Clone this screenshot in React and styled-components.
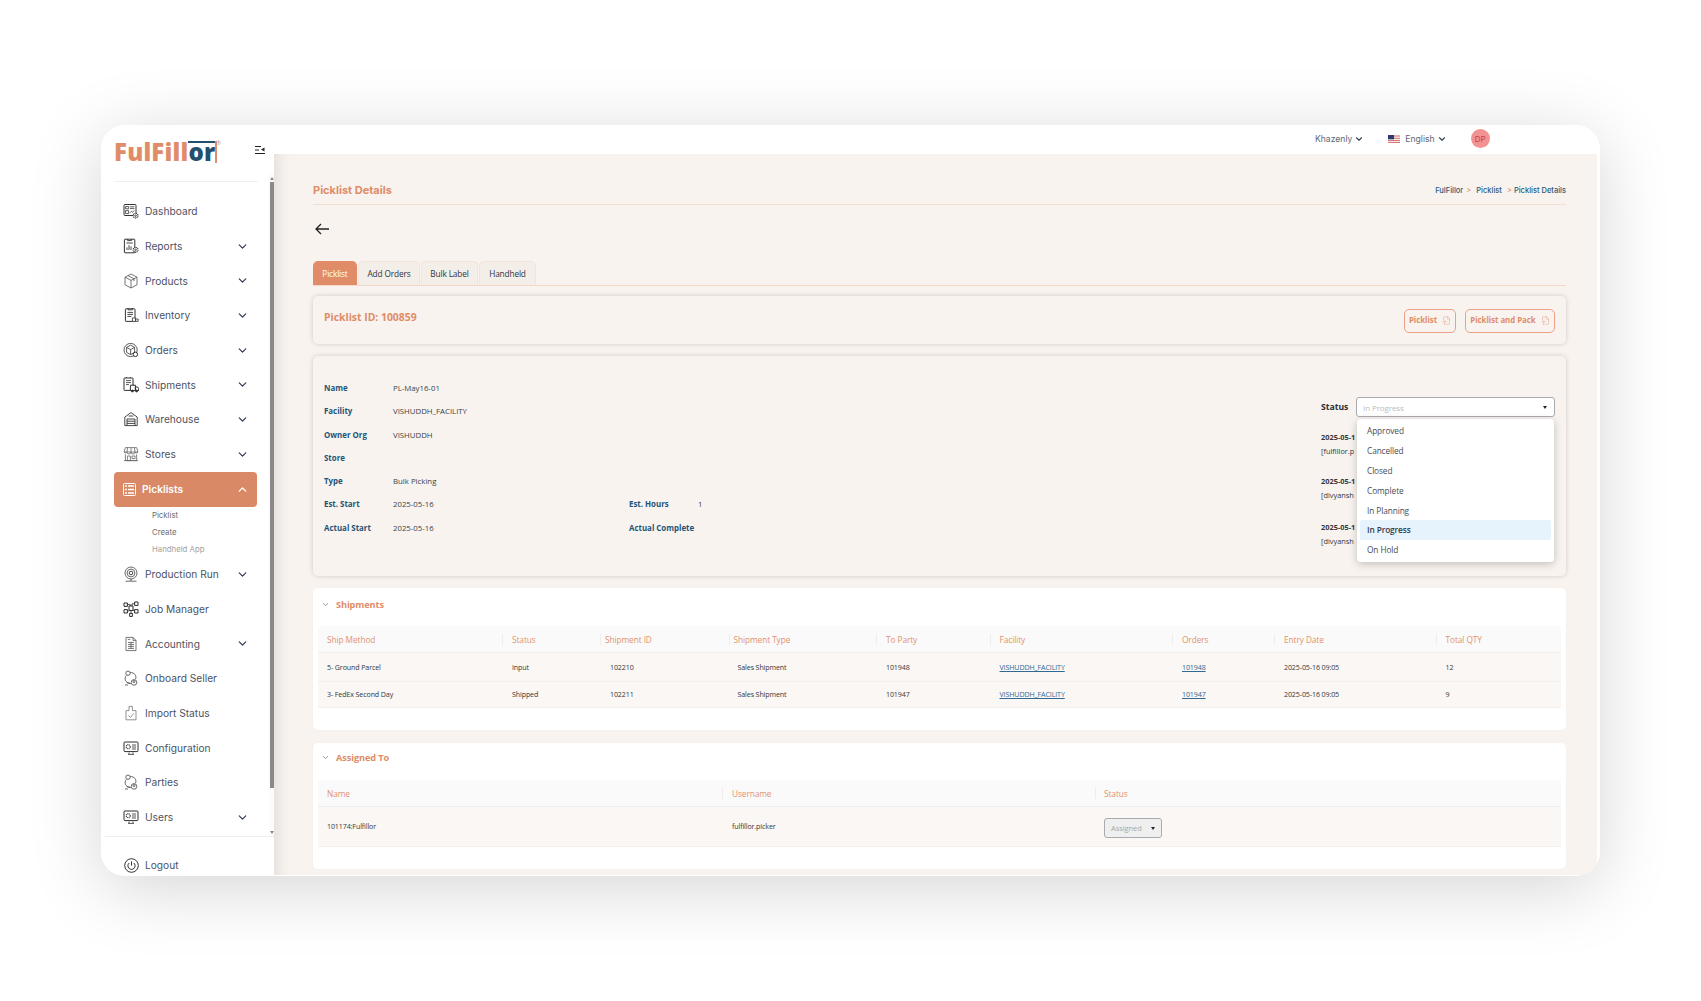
import React from "react";
import styled, { createGlobalStyle } from "styled-components";
import { ChevronDown, ChevronUp, FileType2 } from "lucide-react";

const ORANGE = "#e08c68";
const NAVY = "#1f5577";
const UI = `"Open Sans", "Noto Sans", sans-serif`;
const HEAD = `Inter, "Liberation Sans", sans-serif`;

const Global = createGlobalStyle`
  html, body { margin: 0; padding: 0; background: #fff; overflow: hidden; height: 100%; }
  * { box-sizing: border-box; }
  #root { font-family: ${UI}; }
`;

const Stage = styled.div`
  padding: 125px 0 0 101px;
`;
const Win = styled.div`
  width: 1499px;
  height: 751px;
  display: flex;
  background: #fff;
  border-radius: 24px;
  overflow: hidden;
  padding: 0 3px 1px 0;
  box-shadow: 0 12px 70px rgba(0, 0, 0, 0.17);
`;

/* ---------- sidebar ---------- */
const Side = styled.aside`
  width: 173px;
  flex: none;
  display: flex;
  flex-direction: column;
  background: #fff;
`;
const SideBody = styled.div`
  flex: 1;
  min-height: 0;
  display: flex;
`;
const SideCol = styled.div`
  width: 168px;
  flex: none;
  padding-left: 13px;
`;
const Brand = styled.div`
  height: 57px;
  margin-right: 11px;
  border-bottom: 1px solid #efefef;
  display: flex;
  align-items: flex-start;
  justify-content: space-between;
  padding-top: 13px;
`;
const Logo = styled.div`
  position: relative;
  font-family: "Open Sans", sans-serif;
  font-weight: 800;
  font-size: 24px;
  line-height: 28px;
  letter-spacing: 0.2px;
  color: ${ORANGE};
`;
const LogoDark = styled.span`
  position: relative;
  color: #24506f;
  font-weight: 800;
  &::before {
    content: "";
    position: absolute;
    left: 0;
    right: 0;
    top: 6px;
    height: 2px;
    background: #24506f;
  }
  &::after {
    content: "";
    position: absolute;
    right: -1.5px;
    top: 6px;
    bottom: 5px;
    width: 1.5px;
    background: ${ORANGE};
  }
`;
const LogoMark = styled.span`
  position: absolute;
  top: 1px;
  left: 102px;
  font-size: 6px;
  line-height: 8px;
  font-weight: 400;
  letter-spacing: 0;
  color: #999;
`;
const Collapse = styled.svg`
  width: 10px;
  height: 10px;
  margin: 7px -7px 0 0;
  flex: none;
`;
const Menu = styled.nav`
  padding: 12px 0 0 0;
  margin-right: 12px;
`;
const Row = styled.div`
  height: ${(p) => (p.$active ? "35.5px" : "34.7px")};
  display: flex;
  align-items: center;
  padding-left: 9px;
  padding-right: 8px;
  border-radius: 4px;
  background: ${(p) => (p.$active ? "#d98965" : "transparent")};
  color: ${(p) => (p.$active ? "#fff" : "#4d5262")};
  font-family: ${HEAD};
  font-size: 10.2px;
  font-weight: ${(p) => (p.$active ? 600 : 400)};
`;
const IconBox = styled.span`
  width: ${(p) => (p.$active ? "13px" : "16px")};
  height: 16px;
  flex: none;
  margin-right: 6px;
  display: inline-flex;
  align-items: center;
  justify-content: center;
`;
const Glyph = styled.svg`
  width: 16px;
  height: 16px;
  fill: none;
  stroke: ${(p) => p.$c || "#333"};
  stroke-width: 0.8;
`;
const RowLabel = styled.span`
  flex: 1;
`;
const Subs = styled.div`
  height: 50px;
  padding-left: 38px;
`;
const Sub = styled.div`
  height: 17px;
  line-height: 17px;
  font-family: ${HEAD};
  font-size: 7.8px;
  color: ${(p) => (p.$dim ? "#a3a3a3" : "#6c6c6c")};
`;
const Bar = styled.div`
  width: 5px;
  flex: none;
  margin-top: 49px;
  background: #fbfbfb;
  display: flex;
  flex-direction: column;
  align-items: center;
`;
const BarArrow = styled.span`
  height: 8px;
  flex: none;
  display: flex;
  align-items: center;
  &::before {
    content: "";
    border-left: 2.5px solid transparent;
    border-right: 2.5px solid transparent;
    border-${(p) => (p.$up ? "bottom" : "top")}: 3px solid #8a8a8a;
  }
`;
const BarThumb = styled.span`
  width: 4px;
  height: 606px;
  flex: none;
  background: #8a8a8a;
`;
const BarRest = styled.span`
  flex: 1;
`;
const SideFoot = styled.div`
  height: 39px;
  margin-left: 4px;
  border-top: 1px solid #efefef;
  padding: 10px 0 0 18px;
`;
const FootRow = styled(Row)`
  height: 36px;
  padding-left: 0;
`;

/* ---------- main ---------- */
const Main = styled.main`
  flex: 1;
  min-width: 0;
  display: flex;
  flex-direction: column;
`;
const Top = styled.header`
  height: 29px;
  flex: none;
  display: flex;
  align-items: center;
  padding: 0 0 2px 1041px;
  font-family: ${HEAD};
  font-size: 8.6px;
  color: #62666f;
`;
const TopItem = styled.span`
  display: inline-flex;
  align-items: center;
  gap: 2px;
  margin-right: ${(p) => p.$gap}px;
  & > svg { color: #33404f; }
`;
const Flag = styled.svg`
  width: 12px;
  height: 8px;
  margin-right: 5px;
`;
const Avatar = styled.span`
  width: 19px;
  height: 19px;
  border-radius: 50%;
  background: #f29393;
  color: #cf3c48;
  font-size: 8px;
  display: flex;
  align-items: center;
  justify-content: center;
`;
const Content = styled.div`
  flex: 1;
  min-height: 0;
  padding: 0 31px 0 39px;
  background: #f8f3ef;
  box-shadow: inset 14px 0 14px -10px rgba(0, 0, 0, 0.09);
  overflow: hidden;
`;
const PageHead = styled.div`
  height: 51px;
  padding-top: 22px;
  display: flex;
  align-items: center;
  justify-content: space-between;
  border-bottom: 1px solid #f5ddd0;
`;
const PageTitle = styled.h1`
  margin: 0;
  font-family: ${HEAD};
  font-size: 11px;
  font-weight: 700;
  color: ${ORANGE};
`;
const Crumbs = styled.div`
  font-family: ${HEAD};
  font-size: 7.5px;
  font-weight: 500;
  color: #2c5a78;
  display: flex;
  gap: 2px;
`;
const CrumbSep = styled.span`
  color: ${ORANGE};
  margin: 0 ${(p) => p.$m}px 0 1px;
`;
const Back = styled.div`
  height: 56px;
  padding: 18px 0 0 2px;
`;
const BackArrow = styled.svg`
  display: block;
  width: 14px;
  height: 12px;
  fill: none;
  stroke: #222;
  stroke-width: 1.3;
`;
const Tabs = styled.div`
  height: 25px;
  display: flex;
  gap: 1px;
  border-bottom: 1px solid #f6d8ca;
`;
const Tab = styled.div`
  width: ${(p) => p.$w}px;
  height: 24px;
  padding-bottom: 1px;
  display: flex;
  align-items: center;
  justify-content: center;
  border: 1px solid ${(p) => (p.$on ? ORANGE : "#f4e3da")};
  border-bottom: 0;
  border-radius: 5px 5px 0 0;
  background: ${(p) => (p.$on ? ORANGE : "#f4eee9")};
  color: ${(p) => (p.$on ? "#fff" : "#2f3540")};
  font-size: 8.3px;
  letter-spacing: -0.15px;
`;
const Card = styled.section`
  margin-top: ${(p) => p.$mt}px;
  height: ${(p) => p.$h}px;
  border-radius: 5px;
  background: #f8f3ef;
  box-shadow: 0 0 5px rgba(0, 0, 0, 0.17);
`;
const IdCard = styled(Card)`
  display: flex;
  align-items: center;
  justify-content: space-between;
  padding: 0 11px;
`;
const IdTitle = styled.div`
  font-size: 10.4px;
  font-weight: 700;
  color: ${ORANGE};
  margin-top: -7px;
`;
const Actions = styled.div`
  display: flex;
  gap: 9px;
  margin-top: 2px;
`;
const PdfBtn = styled.button`
  width: ${(p) => p.$w}px;
  height: 24px;
  padding: 0 0 2px;
  display: flex;
  align-items: center;
  justify-content: center;
  gap: 5px;
  border: 1px solid #eba284;
  border-radius: 5px;
  background: transparent;
  color: ${ORANGE};
  font-family: ${UI};
  font-size: 7.9px;
  font-weight: 700;
  letter-spacing: -0.05px;
`;
const DetailCard = styled(Card)`
  display: flex;
  justify-content: space-between;
  padding: 20px 11px 0;
`;
const DetailRow = styled.div`
  height: ${(p) => p.$h || 23.6}px;
  display: flex;
  align-items: center;
`;
const Field = styled.div`
  width: 305px;
  display: flex;
  align-items: center;
`;
const FieldLabel = styled.span`
  width: 69px;
  font-size: 7.9px;
  font-weight: 700;
  color: ${NAVY};
`;
const FieldValue = styled.span`
  font-size: 7.8px;
  color: #3b3f46;
`;
const Right = styled.div`
  width: 234px;
  padding-top: 21px;
`;
const StatusRow = styled.div`
  display: flex;
  align-items: center;
`;
const StatusLabel = styled.span`
  width: 35px;
  font-size: 8.6px;
  font-weight: 700;
  color: #2b2f36;
`;
const SelectWrap = styled.div`
  position: relative;
  flex: 1;
`;
const SelectBox = styled.div`
  height: 20px;
  display: flex;
  align-items: center;
  padding: 0 6px;
  border: 1px solid #a9abb0;
  border-radius: 3px;
  background: #fff;
  color: #b9bcc2;
  font-size: 8px;
  letter-spacing: -0.1px;
  &::after {
    content: "";
    margin-left: auto;
    margin-right: 1px;
    border-left: 2.5px solid transparent;
    border-right: 2.5px solid transparent;
    border-top: 3.5px solid #222;
  }
`;
const Drop = styled.ul`
  position: absolute;
  top: 22px;
  left: 1px;
  right: 1px;
  z-index: 3;
  margin: 0;
  height: 143px;
  padding: 2px 3px;
  list-style: none;
  background: #fff;
  border-radius: 4px;
  box-shadow: 0 2px 8px rgba(0, 0, 0, 0.22);
`;
const Opt = styled.li`
  height: 19.8px;
  display: flex;
  align-items: center;
  padding-left: 7px;
  border-radius: 2px;
  font-size: 8.3px;
  letter-spacing: -0.1px;
  color: ${(p) => (p.$on ? "#2f3a4a" : "#474c54")};
  font-weight: ${(p) => (p.$on ? 600 : 400)};
  background: ${(p) => (p.$on ? "#e6f3fd" : "transparent")};
`;
const Log = styled.div`
  height: 44.5px;
  padding-top: ${(p) => p.$pt}px;
  font-size: 7.4px;
  line-height: 14px;
  white-space: nowrap;
  color: #33373d;
`;
const LogDate = styled.div`
  font-weight: 700;
`;
const Panel = styled.section`
  margin-top: ${(p) => p.$mt}px;
  height: ${(p) => p.$h}px;
  padding: 0 5px;
  border-radius: 5px;
  background: #fff;
  box-shadow: 0 0 2px rgba(0, 0, 0, 0.04);
`;
const PanelHead = styled.div`
  height: ${(p) => p.$h}px;
  padding: 0 0 ${(p) => p.$pb}px 3px;
  display: flex;
  align-items: center;
  gap: 6px;
  font-size: 9.2px;
  font-weight: 700;
  letter-spacing: -0.1px;
  color: ${ORANGE};
  & > svg { color: #444; }
`;
const Grid = styled.div`
  display: grid;
  grid-template-columns: ${(p) => p.$cols};
  height: ${(p) => p.$h}px;
  padding-bottom: ${(p) => p.$pb || 0}px;
  background: ${(p) => (p.$head ? "#fafafa" : "#faf7f4")};
  border-bottom: 1px solid ${(p) => (p.$head ? "#eeeeee" : "#f2efec")};
  border-radius: ${(p) => (p.$head ? "4px 4px 0 0" : "0")};
  align-items: center;
`;
const Th = styled.div`
  position: relative;
  padding-left: ${(p) => p.$pl ?? 10}px;
  font-size: 8.3px;
  font-weight: 500;
  letter-spacing: -0.08px;
  color: #e2916f;
  &::before {
    content: "";
    display: ${(p) => (p.$first ? "none" : "block")};
    position: absolute;
    left: 0;
    top: 0;
    height: 11px;
    width: 1px;
    background: #f0ece9;
  }
`;
const Td = styled.div`
  padding-left: ${(p) => p.$pl ?? 10}px;
  font-size: 7.1px;
  letter-spacing: -0.12px;
  color: #33373d;
  white-space: nowrap;
`;
const Lnk = styled.a`
  color: #2e6a94;
  text-decoration: underline;
`;
const MiniSelect = styled.div`
  width: 58px;
  height: 20px;
  margin-top: 5px;
  display: flex;
  align-items: center;
  padding: 0 6px;
  border: 1px solid #a9abb0;
  border-radius: 3px;
  background: #efefef;
  color: #a7a7a7;
  font-size: 7.6px;
  &::after {
    content: "";
    margin-left: auto;
    border-left: 2.5px solid transparent;
    border-right: 2.5px solid transparent;
    border-top: 3.5px solid #222;
  }
`;

/* ---------- icons ---------- */
const Gear = ({ x, y }) => (
  <g fill="#fff">
    <circle cx={x} cy={y} r="2.4" strokeDasharray="1 .5" strokeWidth="1.1" />
    <circle cx={x} cy={y} r="0.8" />
  </g>
);
const monitor = (
  <Glyph viewBox="0 0 16 16" $c="#2e2e2e">
    <rect x="1" y="2" width="14" height="9.6" rx="1" strokeWidth="1" />
    <circle cx="5.2" cy="6.8" r="2" strokeDasharray="1 .5" strokeWidth="1.1" />
    <path d="M9 5h4M9 7h4M9 9h4M6 12.5v1.6M10 12.5v1.6M5 14.4h6" />
  </Glyph>
);
const nodes = (
  <Glyph viewBox="0 0 16 16" $c="#444">
    <circle cx="5" cy="3.2" r="2.2" />
    <circle cx="11" cy="12.4" r="2.8" />
    <circle cx="11" cy="11.6" r="1" />
    <path d="M3.2 5.4C1 8.5 2 13 7.5 13.6M7.2 2.5c4 0 6.6 2.8 5.4 6.6M2 15h3M4 12.5l3.5 1" />
  </Glyph>
);
const icons = {
  Dashboard: (
    <Glyph viewBox="0 0 16 16">
      <rect x="1" y="1.5" width="12" height="11" rx="1" strokeWidth="1" />
      <path d="M2.6 3.6h3v2.2h-3zM7 3.8h4.4M7 5.6h4.4M2.6 7.6h3v3h-3zM7 9.8l1.4-1.5 1.2 1 1.6-1.8" />
      <Gear x={12.6} y={12.6} />
    </Glyph>
  ),
  Reports: (
    <Glyph viewBox="0 0 16 16">
      <rect x="1.4" y="1.2" width="10.4" height="13.6" rx="0.6" strokeWidth="1" />
      <path d="M4.6 1v1.6h4V1M3.4 5h6.4M4 12V9.4M6 12V7.2M8 12V8.4" strokeWidth="0.9" />
      <Gear x={12.6} y={11.8} />
    </Glyph>
  ),
  Products: (
    <Glyph viewBox="0 0 16 16" $c="#555">
      <path d="M8 1l6 3.2v7.6L8 15l-6-3.2V4.2zM2 4.2l6 3.2 6-3.2M8 7.4V15M5 2.6l6 3.2v2.4" />
    </Glyph>
  ),
  Inventory: (
    <Glyph viewBox="0 0 16 16">
      <rect x="2.4" y="1.8" width="9.6" height="12.6" rx="0.6" strokeWidth="1" />
      <path d="M5 1v1.8h4.4V1M4.4 5.4h5.6M4.4 7.4h5.6M4.4 9.4h4" strokeWidth="0.9" />
      <path d="M9.4 11h3.2v3.4H9.4zM12.6 12h2.6v2.4h-2.6z" fill="#fff" />
    </Glyph>
  ),
  Orders: (
    <Glyph viewBox="0 0 16 16">
      <circle cx="7.6" cy="8" r="6.6" />
      <path d="M7.6 3.2l4 2.2v5l-4 2.2-4-2.2v-5zM3.6 5.4l4 2.2 4-2.2M7.6 7.6v5" />
      <circle cx="12.4" cy="12.4" r="2.2" fill="#fff" strokeWidth="1" />
    </Glyph>
  ),
  Shipments: (
    <Glyph viewBox="0 0 16 16" $c="#2e2e2e">
      <rect x="1" y="1" width="9" height="12.4" rx="0.6" strokeWidth="1" />
      <path d="M3 3.6h5M3 5.6h5M3 7.6h3M3.4 1V0M7.4 1V0" />
      <path d="M7.4 8.2h5v5.4h-5zM12.4 10h2.2l1 1.6v2h-3.2z" fill="#fff" strokeWidth="1" />
      <circle cx="9.4" cy="14" r="1" fill="#333" />
      <circle cx="13.6" cy="14" r="1" fill="#333" />
    </Glyph>
  ),
  Warehouse: (
    <Glyph viewBox="0 0 16 16">
      <path d="M1.8 6L8 1.6 14.2 6v8.6H1.8zM4 14.6V8h8v6.6M4 10.2h8M4 12.4h8M5.6 5h4.8" strokeWidth="0.9" />
    </Glyph>
  ),
  Stores: (
    <Glyph viewBox="0 0 16 16" $c="#666">
      <path d="M2.4 1.6h11.2L15 6H1zM4.6 1.6L4 6M8 1.6V6M11.4 1.6L12 6M1 6a1.7 1.7 0 0 0 3 0 2 2 0 0 0 4 0 2 2 0 0 0 4 0 1.7 1.7 0 0 0 3 0" />
      <path d="M2.4 8.4v6.2h11.2V8.4M1 14.6h14M4.4 10h3v4.6h-3zM9 10h3v2.6H9z" />
    </Glyph>
  ),
  "Production Run": (
    <Glyph viewBox="0 0 16 16" $c="#444">
      <circle cx="8" cy="7" r="6" />
      <circle cx="8" cy="7" r="3.9" />
      <circle cx="8" cy="7" r="1.8" strokeWidth="1" />
      <path d="M8 13v2M2.5 15.2h11" />
    </Glyph>
  ),
  "Job Manager": (
    <Glyph viewBox="0 0 16 16" $c="#2a2a2a">
      <path d="M1 2h3.4v3.4H1zM11.6 1h3.4v3.4h-3.4zM1 8.6h3.4V12H1zM11.6 8.6h3.4V12h-3.4zM6 5h4v4.4H6zM6.6 12.4h2.8v3H6.6z" strokeWidth="1" />
      <path d="M4.4 3.6h3V5M11.6 2.8H9V5M4.4 10h1.6M10 9.4h1.6M8 9.4v3" strokeWidth="0.8" />
    </Glyph>
  ),
  Accounting: (
    <Glyph viewBox="0 0 16 16" $c="#555">
      <path d="M3 1.4h7l3 3v10.2H3zM10 1.4v3h3M5 6.4h6M5 8.4h6M5 10.4h6M5 12.4h6M8 6.4v6M4.8 3.4h2.6" />
    </Glyph>
  ),
  "Onboard Seller": nodes,
  "Import Status": (
    <Glyph viewBox="0 0 16 16" $c="#777">
      <path d="M3 5.6h3V1.4h3.4v4.2h3.6v9.2H3zM5.4 10.4l2 2 3.4-4" />
    </Glyph>
  ),
  Configuration: monitor,
  Parties: nodes,
  Users: monitor,
};

const menu = [
  ["Dashboard", false], ["Reports", true], ["Products", true], ["Inventory", true],
  ["Orders", true], ["Shipments", true], ["Warehouse", true], ["Stores", true],
];
const menu2 = [
  ["Production Run", true], ["Job Manager", false], ["Accounting", true], ["Onboard Seller", false],
  ["Import Status", false], ["Configuration", false], ["Parties", false], ["Users", true],
];
const MenuRow = ({ name, more }) => (
  <Row>
    <IconBox>{icons[name]}</IconBox>
    <RowLabel>{name}</RowLabel>
    {more && <ChevronDown size={13} strokeWidth={2.2} color="#2f3a4a" />}
  </Row>
);

const shipCols = "184px 98px 128.5px 147.5px 113.5px 182.5px 102px 161.5px 1fr";
const shipHead = [["Ship Method", 9, true], ["Status"], ["Shipment ID", 5], ["Shipment Type", 5], ["To Party"], ["Facility"], ["Orders"], ["Entry Date"], ["Total QTY"]];
const shipRows = [
  ["5- Ground Parcel", "Input", "102210", "Sales Shipment", "101948", "VISHUDDH_FACILITY", "101948", "2025-05-16 09:05", "12"],
  ["3- FedEx Second Day", "Shipped", "102211", "Sales Shipment", "101947", "VISHUDDH_FACILITY", "101947", "2025-05-16 09:05", "9"],
];
const assignCols = "404px 373px 1fr";

const LeftFields = [
  ["Name", "PL-May16-01"],
  ["Facility", "VISHUDDH_FACILITY"],
  ["Owner Org", "VISHUDDH"],
  ["Store", "", 22],
  ["Type", "Bulk Picking"],
];

const PdfIcon = () => <FileType2 size={9} strokeWidth={1} />;

export default function App() {
  return (
    <Stage>
      <Global />
      <Win>
        <Side>
          <SideBody>
            <SideCol>
              <Brand>
                <Logo>
                  FulFill<LogoDark>or</LogoDark>
                  <LogoMark>®</LogoMark>
                </Logo>
                <Collapse viewBox="0 0 10 10">
                  <path d="M0 1.5h6M0 5h4M0 8.5h10" stroke="#222" strokeWidth="1" fill="none" />
                  <path d="M9.5 2.5v4L6 4.5z" fill="#222" />
                </Collapse>
              </Brand>
              <Menu>
                {menu.map(([n, m]) => <MenuRow key={n} name={n} more={m} />)}
                <Row $active>
                  <IconBox $active>
                    <svg width="13" height="13" viewBox="0 0 13 13">
                      <rect x="0.5" y="0.5" width="12" height="12" rx="1" fill="none" stroke="#fff" />
                      <path d="M2 3h2M5 3h6M2 6.5h2M5 6.5h6M2 10h2M5 10h6" stroke="#fff" strokeWidth="1.4" />
                    </svg>
                  </IconBox>
                  <RowLabel>Picklists</RowLabel>
                  <ChevronUp size={13} strokeWidth={2.6} color="#fff" />
                </Row>
                <Subs>
                  <Sub>Picklist</Sub>
                  <Sub>Create</Sub>
                  <Sub $dim>Handheld App</Sub>
                </Subs>
                {menu2.map(([n, m]) => <MenuRow key={n} name={n} more={m} />)}
              </Menu>
            </SideCol>
            <Bar>
              <BarArrow $up />
              <BarThumb />
              <BarRest />
              <BarArrow />
            </Bar>
          </SideBody>
          <SideFoot>
            <FootRow>
              <IconBox>
                <svg width="15" height="15" viewBox="0 0 15 15" fill="none" stroke="#333">
                  <circle cx="7.5" cy="7.5" r="6.8" strokeWidth="1" />
                  <path d="M5.2 5a3.6 3.6 0 1 0 4.6 0M7.5 3.4v4.2" strokeWidth="1" />
                </svg>
              </IconBox>
              <RowLabel>Logout</RowLabel>
            </FootRow>
          </SideFoot>
        </Side>
        <Main>
          <Top>
            <TopItem $gap={24}>Khazenly <ChevronDown size={10} strokeWidth={2.6} /></TopItem>
            <Flag viewBox="0 0 12 8">
              <rect width="12" height="8" fill="#f4f4f4" />
              <path d="M0 1h12M0 3.3h12M0 5.6h12M0 7.6h12" stroke="#d65a5a" strokeWidth="0.9" />
              <rect width="6" height="4.3" fill="#2d3a72" />
            </Flag>
            <TopItem $gap={24}>English <ChevronDown size={10} strokeWidth={2.6} /></TopItem>
            <Avatar>DP</Avatar>
          </Top>
          <Content>
            <PageHead>
              <PageTitle>Picklist Details</PageTitle>
              <Crumbs>
                FulFillor <CrumbSep $m={3}>&gt;</CrumbSep> Picklist <CrumbSep $m={0}>&nbsp;&gt;</CrumbSep> Picklist Details
              </Crumbs>
            </PageHead>
            <Back>
              <BackArrow viewBox="0 0 14 12"><path d="M14 6H1M6 1L1 6l5 5" /></BackArrow>
            </Back>
            <Tabs>
              <Tab $on $w={44}>Picklist</Tab>
              <Tab $w={62}>Add Orders</Tab>
              <Tab $w={57}>Bulk Label</Tab>
              <Tab $w={57}>Handheld</Tab>
            </Tabs>
            <IdCard $mt={10} $h={48}>
              <IdTitle>Picklist ID: 100859</IdTitle>
              <Actions>
                <PdfBtn $w={52}>Picklist <PdfIcon /></PdfBtn>
                <PdfBtn $w={90}>Picklist and Pack <PdfIcon /></PdfBtn>
              </Actions>
            </IdCard>
            <DetailCard $mt={12} $h={220}>
              <div>
                {LeftFields.map(([k, v, h]) => (
                  <DetailRow key={k} $h={h}>
                    <Field><FieldLabel>{k}</FieldLabel><FieldValue>{v}</FieldValue></Field>
                  </DetailRow>
                ))}
                <DetailRow>
                  <Field><FieldLabel>Est. Start</FieldLabel><FieldValue>2025-05-16</FieldValue></Field>
                  <Field><FieldLabel>Est. Hours</FieldLabel><FieldValue>1</FieldValue></Field>
                </DetailRow>
                <DetailRow>
                  <Field><FieldLabel>Actual Start</FieldLabel><FieldValue>2025-05-16</FieldValue></Field>
                  <Field><FieldLabel>Actual Complete</FieldLabel><FieldValue /></Field>
                </DetailRow>
              </div>
              <Right>
                <StatusRow>
                  <StatusLabel>Status</StatusLabel>
                  <SelectWrap>
                    <SelectBox>In Progress</SelectBox>
                    <Drop>
                      {["Approved", "Cancelled", "Closed", "Complete", "In Planning", "In Progress", "On Hold"].map((o) => (
                        <Opt key={o} $on={o === "In Progress"}>{o}</Opt>
                      ))}
                    </Drop>
                  </SelectWrap>
                </StatusRow>
                <Log $pt={13}><LogDate>2025-05-1</LogDate>[fulfillor.p</Log>
                <Log $pt={12}><LogDate>2025-05-1</LogDate>[divyansh</Log>
                <Log $pt={14}><LogDate>2025-05-1</LogDate>[divyansh</Log>
              </Right>
            </DetailCard>
            <Panel $mt={12} $h={142}>
              <PanelHead $h={38} $pb={6}><ChevronDown size={9} strokeWidth={1.4} /> Shipments</PanelHead>
              <Grid $head $h={27} $cols={shipCols}>
                {shipHead.map(([t, pl, first]) => <Th key={t} $pl={pl} $first={first}>{t}</Th>)}
              </Grid>
              {shipRows.map((r, i) => (
                <Grid key={r[0]} $h={i === 0 ? 28.5 : 26.5} $pb={i === 0 ? 0 : 1} $cols={shipCols}>
                  <Td $pl={9}>{r[0]}</Td>
                  <Td>{r[1]}</Td>
                  <Td>{r[2]}</Td>
                  <Td $pl={9}>{r[3]}</Td>
                  <Td>{r[4]}</Td>
                  <Td><Lnk>{r[5]}</Lnk></Td>
                  <Td><Lnk>{r[6]}</Lnk></Td>
                  <Td>{r[7]}</Td>
                  <Td>{r[8]}</Td>
                </Grid>
              ))}
            </Panel>
            <Panel $mt={13} $h={126}>
              <PanelHead $h={37} $pb={8}><ChevronDown size={9} strokeWidth={1.4} /> Assigned To</PanelHead>
              <Grid $head $h={27} $cols={assignCols}>
                <Th $pl={9} $first>Name</Th>
                <Th>Username</Th>
                <Th $pl={9}>Status</Th>
              </Grid>
              <Grid $h={40} $pb={2} $cols={assignCols}>
                <Td $pl={9}>101174:Fulfillor</Td>
                <Td>fulfillor.picker</Td>
                <Td $pl={9}><MiniSelect>Assigned</MiniSelect></Td>
              </Grid>
            </Panel>
          </Content>
        </Main>
      </Win>
    </Stage>
  );
}
